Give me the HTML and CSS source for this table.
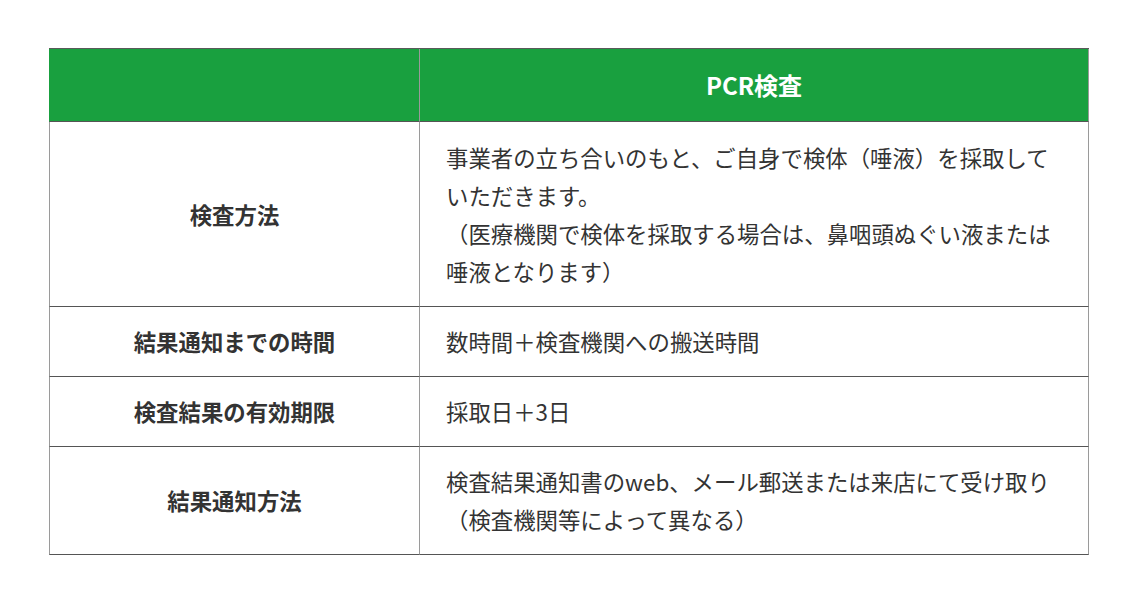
FILE: index.html
```html
<!DOCTYPE html>
<html lang="ja">
<head>
<meta charset="utf-8">
<link rel="stylesheet" href="styles.css">
</head>
<body>
<div class="wrap">
<table class="tbl">
  <thead>
    <tr><th class="c-label"></th><th class="c-val">PCR検査</th></tr>
  </thead>
  <tbody>
    <tr class="r1"><th class="c-label">検査方法</th><td class="c-val">事業者の立ち合いのもと、ご自身で検体（唾液）を採取していただきます。<br>（医療機関で検体を採取する場合は、鼻咽頭ぬぐい液または唾液となります）</td></tr>
    <tr class="r2"><th class="c-label">結果通知までの時間</th><td class="c-val">数時間＋検査機関への搬送時間</td></tr>
    <tr class="r3"><th class="c-label">検査結果の有効期限</th><td class="c-val">採取日＋3日</td></tr>
    <tr class="r4"><th class="c-label">結果通知方法</th><td class="c-val">検査結果通知書のweb、メール郵送または来店にて受け取り（検査機関等によって異なる）</td></tr>
  </tbody>
</table>
</div>
</body>
</html>
```
FILE: styles.css
```css
html, body { margin: 0; padding: 0; background: #fff; }
body { font-family: "Noto Sans CJK JP", "Noto Sans", sans-serif; color: #333; }
.wrap { padding: 48px 0 0 49px; }
.tbl {
  width: 1040px;
  border-collapse: separate;
  border-spacing: 0;
  table-layout: fixed;
  border-top: 1px solid #5a5a5a;
}
.tbl th, .tbl td {
  font-size: 22.4px;
  line-height: 38.2px;
  padding: 15.5px 26px 15.3px;
  border-right: 1px solid #9a9a9a;
  border-bottom: 1px solid #555;
  vertical-align: middle;
}
.tbl .c-label { width: 317px; border-left: 1px solid #9a9a9a; text-align: center; font-weight: bold; }
.tbl td.c-val { text-align: left; font-weight: normal; }
.tbl thead th { background: #19a03f; color: #fff; font-weight: bold; padding: 17px 26px; font-size: 24px; line-height: 38px; text-align: center; }
.tbl thead th.c-label { border-left: 1px solid #19a03f; }
```
